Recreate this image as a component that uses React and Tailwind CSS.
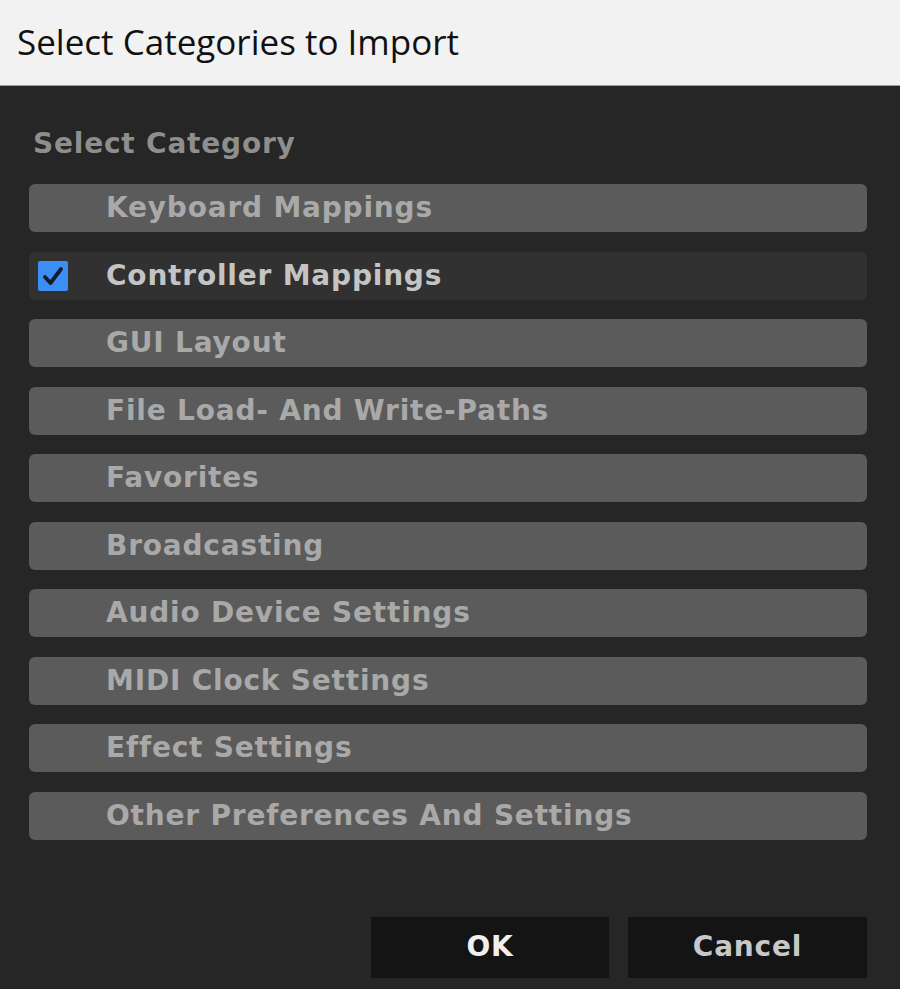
import React from "react";

const items = [
  "Keyboard Mappings",
  "Controller Mappings",
  "GUI Layout",
  "File Load- And Write-Paths",
  "Favorites",
  "Broadcasting",
  "Audio Device Settings",
  "MIDI Clock Settings",
  "Effect Settings",
  "Other Preferences And Settings",
];

function Row({ label, checked }) {
  return (
    <div
      className={`relative flex h-[48px] items-center rounded-[6px] pl-[77px] ${
        checked ? "bg-[#313131] text-[#c4c4c4]" : "bg-[#5b5b5b] text-[#a9a9a9]"
      }`}
    >
      {checked && (
        <div className="absolute left-[9px] top-[9px] flex h-[30px] w-[30px] items-center justify-center rounded-[2px] bg-[#3d8ef4]">
          <svg width="24" height="22" viewBox="0 0 24 22">
            <path d="M4 12 L9.5 18 L20 4" fill="none" stroke="#141c2c" strokeWidth="3.8" strokeLinecap="round" strokeLinejoin="round" />
          </svg>
        </div>
      )}
      <span className="text-[28px] font-bold tracking-[0.8px] leading-none">{label}</span>
    </div>
  );
}

export default function App() {
  return (
    <div className="h-[989px] w-[900px] bg-[#262626]" style={{ fontFamily: '"DejaVu Sans", Verdana, sans-serif' }}>
      <div className="flex h-[86px] items-center border-b border-[#9a9a9a] bg-[#f2f2f2] pl-[17px]">
        <span className="text-[35px] text-[#111]" style={{ fontFamily: '"Open Sans", sans-serif' }}>
          Select Categories to Import
        </span>
      </div>
      <div className="px-[29px] pt-[44px]">
        <div className="pl-[4px] text-[28px] font-bold tracking-[0.8px] leading-none text-[#8e8e8e]">Select Category</div>
        <div className="mt-[26px] flex w-[838px] flex-col gap-[19.5px]">
          {items.map((it, i) => (
            <Row key={it} label={it} checked={i === 1} />
          ))}
        </div>
        <div className="mt-[77px] flex justify-end gap-[19px] pr-[4px]">
          <button className="h-[61px] w-[238px] bg-[#141414] text-[28px] font-bold tracking-[0.8px] text-[#f0f0f0]">OK</button>
          <button className="h-[61px] w-[239px] bg-[#141414] text-[28px] font-bold tracking-[0.8px] text-[#c8c8c8]">Cancel</button>
        </div>
      </div>
    </div>
  );
}
